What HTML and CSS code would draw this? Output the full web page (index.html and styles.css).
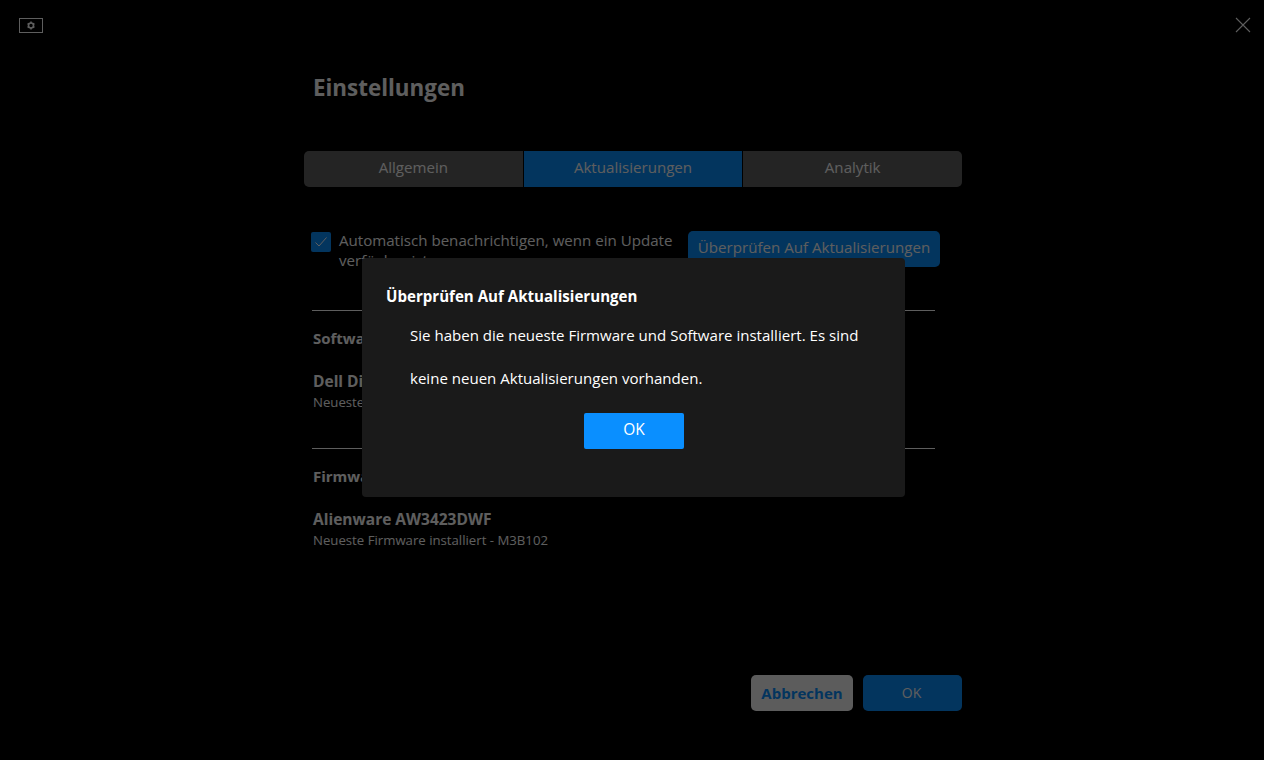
FILE: index.html
```html
<!DOCTYPE html>
<html lang="de">
<head>
<meta charset="utf-8">
<title>Einstellungen</title>
<link rel="stylesheet" href="styles.css">
</head>
<body>
<div class="app">
  <header class="topbar">
    <svg class="monitor" width="24" height="15" viewBox="0 0 24 15" fill="none">
      <rect x="0.5" y="0.5" width="23" height="14" stroke="#fff" stroke-width="1"/>
      <circle cx="12" cy="7.5" r="2.5" stroke="#fff" stroke-width="1.6"/>
      <path d="M12 3.6v1.4M12 10v1.4M8.6 5.5l1.2.7M14.2 8.8l1.2.7M8.6 9.5l1.2-.7M14.2 6.2l1.2-.7" stroke="#fff" stroke-width="1.6"/>
    </svg>
    <svg class="close" width="16" height="16" viewBox="0 0 16 16" fill="none">
      <path d="M1 1l14 14M15 1L1 15" stroke="#fff" stroke-width="1.1"/>
    </svg>
  </header>
  <main class="panel">
    <h1 class="title">Einstellungen</h1>
    <nav class="tabs">
      <div class="tab">Allgemein</div>
      <div class="tab active">Aktualisierungen</div>
      <div class="tab">Analytik</div>
    </nav>
    <section class="auto">
      <div class="check">
        <svg width="14" height="12" viewBox="0 0 14 12" fill="none"><path d="M1.5 6.5l3.5 3.5 7.5-8.5" stroke="#fff" stroke-width="1"/></svg>
      </div>
      <p class="auto-label">Automatisch benachrichtigen, wenn ein Update verfügbar ist</p>
      <button class="check-btn">Überprüfen Auf Aktualisierungen</button>
    </section>
    <section class="group first">
      <h2 class="group-title">Software</h2>
      <h3 class="item-name">Dell Display Manager</h3>
      <p class="item-sub">Neueste Software installiert</p>
    </section>
    <section class="group second">
      <h2 class="group-title">Firmware</h2>
      <h3 class="item-name">Alienware AW3423DWF</h3>
      <p class="item-sub">Neueste Firmware installiert - M3B102</p>
    </section>
    <footer class="actions">
      <button class="btn cancel">Abbrechen</button>
      <button class="btn ok">OK</button>
    </footer>
  </main>
</div>
<div class="overlay">
  <div class="dialog">
    <h2 class="dialog-title">Überprüfen Auf Aktualisierungen</h2>
    <p class="dialog-text">Sie haben die neueste Firmware und Software installiert. Es sind keine neuen Aktualisierungen vorhanden.</p>
    <button class="dialog-ok">OK</button>
  </div>
</div>
</body>
</html>
```
FILE: styles.css
```css
* { box-sizing: border-box; }
html, body { margin: 0; height: 100%; background: #000; overflow: hidden; }
body { font-family: "Open Sans", "Noto Sans", sans-serif; color: #fff; }
.app { height: 760px; display: flex; flex-direction: column; }
.topbar { display: flex; justify-content: space-between; align-items: flex-start; padding: 18px 13px 0 19px; height: 70px; flex: none; }
.monitor { display: block; }
.close { display: block; margin-top: -1px; }
.panel { width: 658px; margin-left: 304px; display: flex; flex-direction: column; flex: 1; }
.title { margin: 0 0 0 9px; font-size: 22.4px; line-height: 36px; font-weight: 700; }
.tabs { display: flex; gap: 1px; margin-top: 45px; height: 36px; border-radius: 5px; overflow: hidden; }
.tab { flex: 1; background: #636363; font-size: 15.1px; display: flex; align-items: center; justify-content: center; padding-bottom: 4px; }
.tab.active { background: #0a8fff; }
.auto { display: flex; align-items: flex-start; margin: 44px 0 0 8px; height: 80px; border-bottom: 1px solid #fff; width: 623px; }
.check { width: 20px; height: 20px; background: #0a8fff; border-radius: 2px; display: flex; align-items: center; justify-content: center; flex: none; margin: 1px 0 0 -1px; }
.auto-label { margin: -1px 0 0 8px; width: 349px; font-size: 15.1px; line-height: 20px; flex: none; }
.check-btn { background: #0a8fff; color: #fff; border: 0; border-radius: 5px; height: 36px; width: 252px; padding: 0 0 4px; font: inherit; font-size: 15.1px; flex: none; }
.group { margin-left: 8px; width: 623px; padding-left: 1px; }
.group.first { height: 138px; border-bottom: 1px solid #fff; padding-top: 16px; }
.group.second { padding-top: 16px; }
.group-title { margin: 0; font-size: 15px; line-height: 22px; font-weight: 700; }
.item-name { margin: 21px 0 0; font-size: 15.5px; line-height: 22px; font-weight: 700; }
.item-sub { margin: 0; font-size: 13.2px; line-height: 20px; }
.actions { margin-top: auto; margin-bottom: 49px; display: flex; justify-content: flex-end; gap: 10px; }
.btn { height: 36px; border: 0; border-radius: 5px; font: inherit; font-size: 15px; padding: 0 0 1px; }
.cancel { width: 102px; background: #fafafa; color: #0a8fff; font-weight: 700; }
.ok { width: 99px; background: #0a8fff; color: #fff; font-size: 14px; padding-right: 2px; }
.overlay { position: fixed; inset: 0; background: rgba(0, 0, 0, .63); }
.dialog { position: absolute; left: 362px; top: 258px; width: 543px; height: 239px; background: #1a1a1a; border-radius: 4px; padding: 27px 24px 0; }
.dialog-title { margin: 0; font-size: 15.1px; line-height: 22px; font-weight: 700; }
.dialog-text { margin: 7px 0 0 24px; width: 470px; font-size: 15.05px; line-height: 43px; }
.dialog-ok { display: block; margin: 13px 0 0 198px; width: 100px; height: 36px; background: #0a8fff; color: #fff; border: 0; border-radius: 2px; font: inherit; font-size: 15.5px; padding: 0 0 5px; }
```
